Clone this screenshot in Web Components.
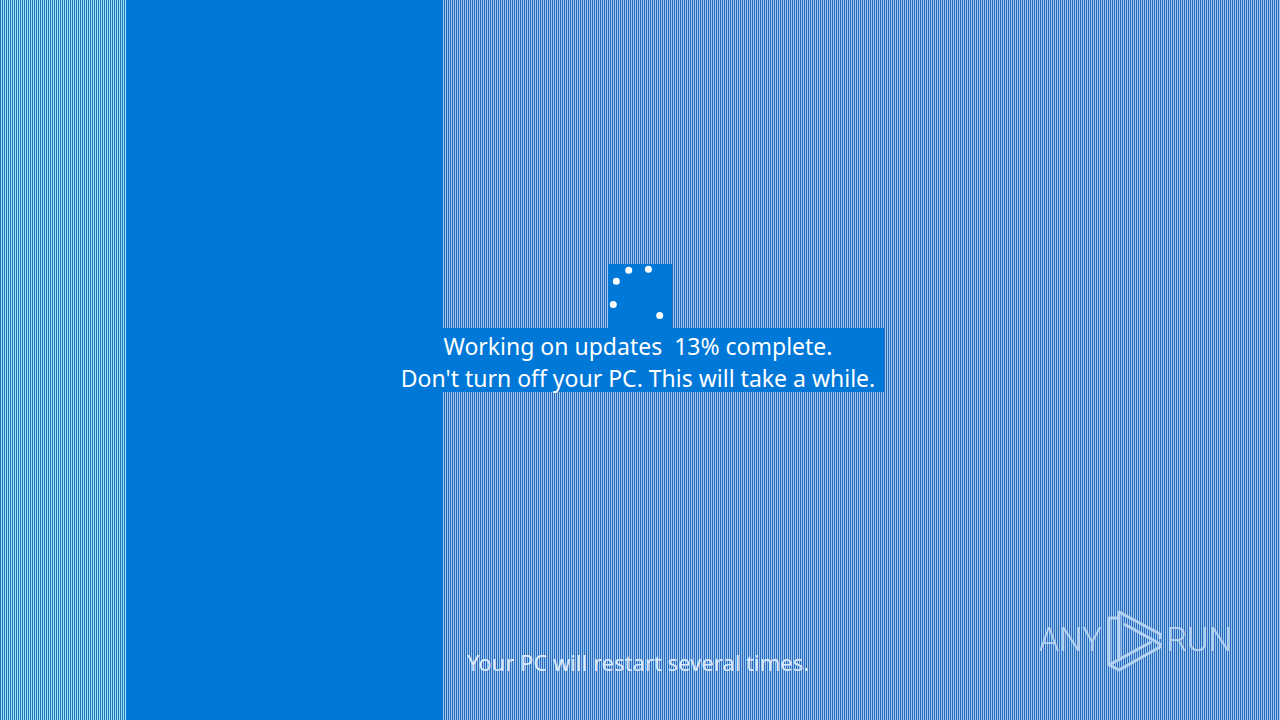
<!DOCTYPE html>
<html lang="en">
<head>
<meta charset="utf-8">
<title>Working on updates</title>
<style>
body { margin: 0; }
</style>
</head>
<body>
<update-screen>
  <progress-spinner slot="spinner"></progress-spinner>
  <status-message slot="status">
    <span slot="progress">Working on updates  13% complete.</span>
    <span slot="advice">Don't turn off your PC. This will take a while.</span>
  </status-message>
  <span slot="note">Your PC will restart several times.</span>
  <brand-mark slot="brand"></brand-mark>
</update-screen>

<script>
const define = (name, html) => customElements.define(name, class extends HTMLElement {
  constructor() {
    super();
    this.attachShadow({ mode: "open" }).innerHTML = html;
  }
});

define("update-screen", `
<style>
  :host {
    --blue: #0078d8;
    display: grid;
    grid-template-rows: 1fr auto 1fr;
    justify-items: center;
    position: relative;
    box-sizing: border-box;
    min-height: 100vh;
    padding: 40px 0;
    color: #fff;
    font: 23px/32px "Noto Sans", "Open Sans", sans-serif;
    background: linear-gradient(90deg, #2868b8 50%, #9cc8f0 50%) 0 0 / 2px 2px;
  }
  .bands {
    position: absolute;
    inset: 0;
    display: grid;
    grid-template-columns: 9.84% 24.76% 1fr;
  }
  .cyan { background: linear-gradient(90deg, #2874b0 50%, #98e4f8 50%) 0 0 / 2px 2px; }
  .solid { background: var(--blue); }
  main, footer { position: relative; }
  main { grid-row: 2; display: flex; flex-direction: column; align-items: center; padding-bottom: 64px; }
  footer { grid-row: 3; align-self: end; padding: 0 4px 2px 0; color: #dce8fc; font-size: 22px; }
  aside { position: absolute; right: 48px; bottom: 48px; }
</style>
<div class="bands"><div class="cyan"></div><div class="solid"></div></div>
<main><slot name="spinner"></slot><slot name="status"></slot></main>
<footer><slot name="note"></slot></footer>
<aside><slot name="brand"></slot></aside>`);

define("progress-spinner", `
<style>
  :host { display: block; width: 64px; height: 64px; background: var(--blue); }
  svg { display: block; }
</style>
<svg width="64" height="64" viewBox="0 0 64 64" fill="#fff" role="img" aria-label="Loading">
  <circle cx="5.300" cy="40.500" r="3.500"/>
  <circle cx="8.300" cy="17.300" r="3.500"/>
  <circle cx="20.700" cy="6.300" r="3.500"/>
  <circle cx="40.400" cy="5.300" r="3.500"/>
  <circle cx="51.700" cy="51.500" r="3.500"/>
</svg>`);

define("status-message", `
<style>
  :host { display: block; box-sizing: border-box; height: 64px; padding: 2px 9px 0 5px; background: var(--blue); text-align: center; white-space: nowrap; }
  p { margin: 0; white-space: pre; }
</style>
<p><slot name="progress"></slot></p><p><slot name="advice"></slot></p>`);

define("brand-mark", `
<style>
  :host { display: flex; align-items: center; gap: 4px; color: #c4dcf6; opacity: .85; font: 300 33px/64px Roboto, sans-serif; }
  svg { display: block; }
</style>
<span>ANY</span>
<svg width="56" height="64" viewBox="0 0 56 64" fill="none" stroke="currentColor" stroke-width="3" stroke-linejoin="round" aria-hidden="true">
  <path d="M13 53V4L54 26V31M13 10H3V57L13 62L54 39V36L18 16M3 57L45 34"/>
</svg>
<span>RUN</span>`);
</script>
</body>
</html>
